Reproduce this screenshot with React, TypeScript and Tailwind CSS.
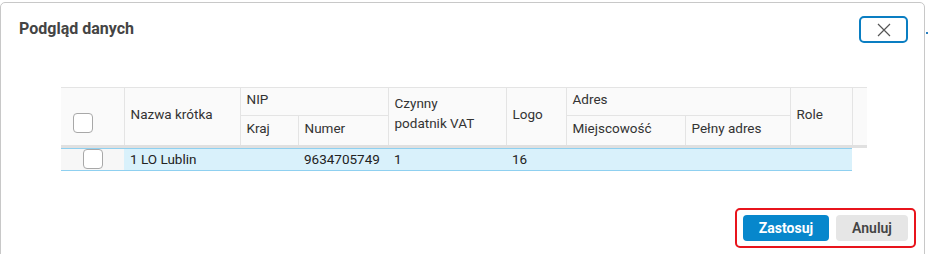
import React from "react";

function Checkbox({ className = "" }: { className?: string }) {
  return (
    <div
      className={
        "w-[20px] h-[20px] rounded-[4px] border border-[#a8a8a8] bg-white " +
        className
      }
    />
  );
}

export default function App() {
  const th =
    "border border-[#e4e4e4] bg-[#fafafa] text-left font-normal text-[13.5px] text-[#333] px-[6px] align-middle";
  const td =
    "bg-[#d9f1fb] border-t-[3px] border-t-[#e0e0e0] border-b border-b-[#8fd0f0] px-[6px] shadow-[inset_0_1px_0_#8fd0f0]";
  return (
    <div
      className="w-[928px] h-[254px] overflow-hidden bg-white relative"
      style={{ fontFamily: "Roboto, 'Liberation Sans', sans-serif" }}
    >
      <div className="absolute left-[926px] top-[32px] w-[2px] h-[2px] bg-[#2a7fc0]" />
      <div className="w-[925px] h-[270px] mt-[2px] border border-[#c8c8c8] rounded-t-[5px] bg-white flex flex-col">
        <div className="flex items-center justify-between h-[52px] pl-[18px] pr-[16px]">
          <div className="text-[16px] font-bold text-[#444] pb-[1px]">
            Podgląd danych
          </div>
          <button className="w-[49px] h-[27px] mt-[1px] border-2 border-[#0a7ec2] rounded-[5px] flex items-center justify-center bg-white">
            <svg width="16" height="16" viewBox="0 0 16 16">
              <path
                d="M2 2 L14 14 M14 2 L2 14"
                stroke="#555"
                strokeWidth="1.2"
                fill="none"
              />
            </svg>
          </button>
        </div>
        <div className="pl-[60px] pt-[32px]">
          <table className="table-fixed border-collapse w-[806px]">
            <colgroup>
              <col className="w-[63px]" />
              <col className="w-[116px]" />
              <col className="w-[58px]" />
              <col className="w-[90px]" />
              <col className="w-[118px]" />
              <col className="w-[60px]" />
              <col className="w-[119px]" />
              <col className="w-[105px]" />
              <col className="w-[62px]" />
              <col className="w-[15px]" />
            </colgroup>
            <thead>
              <tr className="h-[28px]">
                <th
                  rowSpan={2}
                  className="border border-[#e4e4e4] border-l-0 bg-[#fafafa] align-top p-0"
                >
                  <div className="pt-[25px] pl-[12px]">
                    <Checkbox />
                  </div>
                </th>
                <th rowSpan={2} className={th + " pb-[5px]"}>
                  Nazwa krótka
                </th>
                <th colSpan={2} className={th + " pb-[4px]"}>
                  NIP
                </th>
                <th rowSpan={2} className={th + " leading-[20px] pb-[8px]"}>
                  Czynny
                  <br />
                  podatnik VAT
                </th>
                <th rowSpan={2} className={th + " pb-[5px]"}>
                  Logo
                </th>
                <th colSpan={2} className={th + " pb-[4px]"}>
                  Adres
                </th>
                <th rowSpan={2} className={th + " pb-[5px]"}>
                  Role
                </th>
                <th rowSpan={2} className={th + " border-r-0"} />
              </tr>
              <tr className="h-[31px]">
                <th className={th + " pb-[5px]"}>Kraj</th>
                <th className={th + " pb-[5px]"}>Numer</th>
                <th className={th + " pb-[5px]"}>Miejscowość</th>
                <th className={th + " pb-[5px]"}>Pełny adres</th>
              </tr>
            </thead>
            <tbody>
              <tr className="h-[24px] text-[13.5px] text-[#222]">
                <td className="bg-[#f7f7f7] border-t-[3px] border-t-[#e0e0e0] border-b border-b-[#8fd0f0] p-0 shadow-[inset_0_1px_0_#8fd0f0]">
                  <div className="flex justify-center">
                    <Checkbox />
                  </div>
                </td>
                <td className={td}>1 LO Lublin</td>
                <td className={td}></td>
                <td className={td}>9634705749</td>
                <td className={td}>1</td>
                <td className={td}>16</td>
                <td className={td}></td>
                <td className={td}></td>
                <td className={td}></td>
                <td className="border-t-[3px] border-t-[#e0e0e0] p-0"></td>
              </tr>
            </tbody>
          </table>
        </div>
        <div className="flex justify-end pr-[8px] pt-[37px]">
          <div className="flex gap-[7px] border-2 border-[#e8141c] rounded-[5px] px-[6px] py-[5px]">
            <button className="w-[86px] h-[26px] rounded-[4px] bg-[#0787cc] text-white text-[14px] font-bold">
              Zastosuj
            </button>
            <button className="w-[72px] h-[26px] rounded-[4px] bg-[#e6e6e6] text-[#444] text-[14px] font-semibold">
              Anuluj
            </button>
          </div>
        </div>
      </div>
    </div>
  );
}
